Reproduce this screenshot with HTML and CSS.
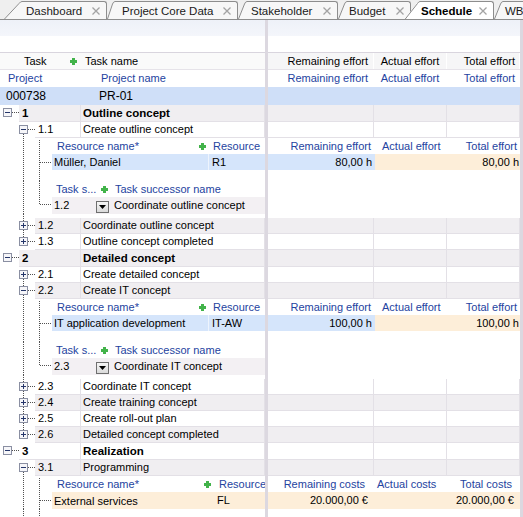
FILE: index.html
```html
<!DOCTYPE html>
<html lang="en">
<head>
    <meta charset="UTF-8">
    <meta name="viewport" content="width=device-width, initial-scale=1">
    <link rel="stylesheet" href="styles.css">
</head>
<body>

<div class="tabs">
    <div class="tab">
        <svg class="slant" width="18" height="18"><path class="f" d="M0 18L15 2Q16.5 0 18 0V18Z"/><path class="s" d="M0.5 18L15 2.5Q16.5 0.5 18 0.5"/></svg>
        <div class="lbl w1 p4">Dashboard<svg class="x" width="8" height="8"><path d="M0.5 0.5l7 7M7.5 0.5l-7 7"/></svg></div>
    </div>
    <div class="tab">
        <svg class="slant" width="8" height="18"><path class="f" d="M0 18L5 3Q6.5 0 8 0V18Z"/><path class="s" d="M0.5 18L5.5 3Q6.5 0.5 8 0.5"/></svg>
        <div class="lbl w2 p7">Project Core Data<svg class="x" width="8" height="8"><path d="M0.5 0.5l7 7M7.5 0.5l-7 7"/></svg></div>
    </div>
    <div class="tab">
        <svg class="slant" width="9" height="18"><path class="f" d="M0 18L6 3Q7.5 0 9 0V18Z"/><path class="s" d="M0.5 18L6.5 3Q7.5 0.5 9 0.5"/></svg>
        <div class="lbl w3 p4">Stakeholder<svg class="x" width="8" height="8"><path d="M0.5 0.5l7 7M7.5 0.5l-7 7"/></svg></div>
    </div>
    <div class="tab">
        <svg class="slant" width="9" height="18"><path class="f" d="M0 18L6 3Q7.5 0 9 0V18Z"/><path class="s" d="M0.5 18L6.5 3Q7.5 0.5 9 0.5"/></svg>
        <div class="lbl w4 p2">Budget<svg class="x" width="8" height="8"><path d="M0.5 0.5l7 7M7.5 0.5l-7 7"/></svg></div>
    </div>
    <div class="tab active">
        <svg class="slant" width="16" height="19"><path class="f" d="M0 19L13 2Q14.5 0 16 0V19Z"/><path class="s" d="M0.5 19L13.5 2.5Q14.5 0.5 16 0.5"/></svg>
        <div class="lbl w5 p1">Schedule<svg class="x" width="8" height="8"><path d="M0.5 0.5l7 7M7.5 0.5l-7 7"/></svg></div>
    </div>
    <div class="tab">
        <svg class="slant" width="9" height="18"><path class="f" d="M0 18L6 3Q7.5 0 9 0V18Z"/><path class="s" d="M0.5 18L6.5 3Q7.5 0.5 9 0.5"/></svg>
        <div class="lbl w6 p2">WBS<svg class="x" width="8" height="8"><path d="M0.5 0.5l7 7M7.5 0.5l-7 7"/></svg></div>
    </div>
</div>

<div class="main">

    <!-- tree side -->
    <div class="left">
        <div class="blank1"></div>
        <div class="blank2"></div>
        <div class="r colhead">
            <span class="ct">Task</span>
            <svg class="plus" width="7" height="7"><path d="M2 0h3v2h2v3H5v2H2V5H0V2h2z"/></svg>
            <span class="cn">Task name</span>
        </div>
        <div class="r projhead"><span class="p1">Project</span><span>Project name</span></div>
        <div class="r project"><span class="v1">000738</span><span>PR-01</span></div>

        <!-- 1 -->
        <div class="r h17 sec alt">
            <svg class="tr" width="19" height="17"><path class="dl" d="M12 7.5h7"/><rect class="bx" x="3.5" y="3.5" width="8" height="8"/><path class="mk" d="M5 7.5h5"/></svg>
            <div class="num n1">1</div><div class="nm">Outline concept</div>
        </div>
        <div class="r">
            <svg class="tr" width="35" height="16"><path class="dl" d="M28 7.5h7M23.5 12v4"/><rect class="bx" x="19.5" y="3.5" width="8" height="8"/><path class="mk" d="M21 7.5h5"/></svg>
            <div class="num n2">1.1</div><div class="nm">Create outline concept</div>
        </div>
        <div class="r dh">
            <svg class="tr" width="52" height="16"><path class="dl" d="M23.5 0v16M39.5 2v14"/></svg>
            <div class="rn">Resource name*<svg class="plus" width="7" height="7"><path d="M2 0h3v2h2v3H5v2H2V5H0V2h2z"/></svg></div>
            <div class="rc">Resource</div>
        </div>
        <div class="r dd sel">
            <svg class="tr" width="52" height="16"><path class="dl" d="M23.5 0v16M39.5 0v16M40 8.5h12"/></svg>
            <div class="rn">Müller, Daniel</div><div class="rc">R1</div>
        </div>
        <div class="r h11"><svg class="tr" width="52" height="11"><path class="dl" d="M23.5 0v11M39.5 0v11"/></svg></div>
        <div class="r dh">
            <svg class="tr" width="52" height="16"><path class="dl" d="M23.5 0v16M39.5 0v16"/></svg>
            <div class="sn">Task s...<svg class="plus" width="7" height="7"><path d="M2 0h3v2h2v3H5v2H2V5H0V2h2z"/></svg></div>
            <div class="st">Task successor name</div>
        </div>
        <div class="r h17 sd">
            <svg class="tr" width="52" height="17"><path class="dl" d="M23.5 0v17M39.5 0v8M40 7.5h12"/></svg>
            <div class="sn">1.2<span class="drop"><svg width="7" height="4"><path d="M0 0h7L3.5 4z"/></svg></span></div>
            <div class="st">Coordinate outline concept</div>
        </div>
        <div class="r h4"><svg class="tr" width="52" height="4"><path class="dl" d="M23.5 0v4"/></svg></div>
        <div class="r alt">
            <svg class="tr" width="35" height="16"><path class="dl" d="M28 7.5h7M23.5 0v3M23.5 12v4"/><rect class="bx" x="19.5" y="3.5" width="8" height="8"/><path class="mk" d="M21 7.5h5M23.5 5v5"/></svg>
            <div class="num n2">1.2</div><div class="nm">Coordinate outline concept</div>
        </div>
        <div class="r">
            <svg class="tr" width="35" height="16"><path class="dl" d="M28 7.5h7M23.5 0v3"/><rect class="bx" x="19.5" y="3.5" width="8" height="8"/><path class="mk" d="M21 7.5h5M23.5 5v5"/></svg>
            <div class="num n2">1.3</div><div class="nm">Outline concept completed</div>
        </div>

        <!-- 2 -->
        <div class="r h17 sec alt">
            <svg class="tr" width="19" height="17"><path class="dl" d="M12 7.5h7"/><rect class="bx" x="3.5" y="3.5" width="8" height="8"/><path class="mk" d="M5 7.5h5"/></svg>
            <div class="num n1">2</div><div class="nm">Detailed concept</div>
        </div>
        <div class="r">
            <svg class="tr" width="35" height="16"><path class="dl" d="M28 7.5h7M23.5 12v4"/><rect class="bx" x="19.5" y="3.5" width="8" height="8"/><path class="mk" d="M21 7.5h5M23.5 5v5"/></svg>
            <div class="num n2">2.1</div><div class="nm">Create detailed concept</div>
        </div>
        <div class="r alt">
            <svg class="tr" width="35" height="16"><path class="dl" d="M28 7.5h7M23.5 0v3M23.5 12v4"/><rect class="bx" x="19.5" y="3.5" width="8" height="8"/><path class="mk" d="M21 7.5h5"/></svg>
            <div class="num n2">2.2</div><div class="nm">Create IT concept</div>
        </div>
        <div class="r dh">
            <svg class="tr" width="52" height="16"><path class="dl" d="M23.5 0v16M39.5 2v14"/></svg>
            <div class="rn">Resource name*<svg class="plus" width="7" height="7"><path d="M2 0h3v2h2v3H5v2H2V5H0V2h2z"/></svg></div>
            <div class="rc">Resource</div>
        </div>
        <div class="r dd sel">
            <svg class="tr" width="52" height="16"><path class="dl" d="M23.5 0v16M39.5 0v16M40 8.5h12"/></svg>
            <div class="rn">IT application development</div><div class="rc">IT-AW</div>
        </div>
        <div class="r h11"><svg class="tr" width="52" height="11"><path class="dl" d="M23.5 0v11M39.5 0v11"/></svg></div>
        <div class="r dh">
            <svg class="tr" width="52" height="16"><path class="dl" d="M23.5 0v16M39.5 0v16"/></svg>
            <div class="sn">Task s...<svg class="plus" width="7" height="7"><path d="M2 0h3v2h2v3H5v2H2V5H0V2h2z"/></svg></div>
            <div class="st">Task successor name</div>
        </div>
        <div class="r h17 sd">
            <svg class="tr" width="52" height="17"><path class="dl" d="M23.5 0v17M39.5 0v8M40 7.5h12"/></svg>
            <div class="sn">2.3<span class="drop"><svg width="7" height="4"><path d="M0 0h7L3.5 4z"/></svg></span></div>
            <div class="st">Coordinate IT concept</div>
        </div>
        <div class="r h4"><svg class="tr" width="52" height="4"><path class="dl" d="M23.5 0v4"/></svg></div>
        <div class="r">
            <svg class="tr" width="35" height="16"><path class="dl" d="M28 7.5h7M23.5 0v3M23.5 12v4"/><rect class="bx" x="19.5" y="3.5" width="8" height="8"/><path class="mk" d="M21 7.5h5M23.5 5v5"/></svg>
            <div class="num n2">2.3</div><div class="nm">Coordinate IT concept</div>
        </div>
        <div class="r alt">
            <svg class="tr" width="35" height="16"><path class="dl" d="M28 7.5h7M23.5 0v3M23.5 12v4"/><rect class="bx" x="19.5" y="3.5" width="8" height="8"/><path class="mk" d="M21 7.5h5M23.5 5v5"/></svg>
            <div class="num n2">2.4</div><div class="nm">Create training concept</div>
        </div>
        <div class="r">
            <svg class="tr" width="35" height="16"><path class="dl" d="M28 7.5h7M23.5 0v3M23.5 12v4"/><rect class="bx" x="19.5" y="3.5" width="8" height="8"/><path class="mk" d="M21 7.5h5M23.5 5v5"/></svg>
            <div class="num n2">2.5</div><div class="nm">Create roll-out plan</div>
        </div>
        <div class="r alt">
            <svg class="tr" width="35" height="16"><path class="dl" d="M28 7.5h7M23.5 0v3"/><rect class="bx" x="19.5" y="3.5" width="8" height="8"/><path class="mk" d="M21 7.5h5M23.5 5v5"/></svg>
            <div class="num n2">2.6</div><div class="nm">Detailed concept completed</div>
        </div>

        <!-- 3 -->
        <div class="r h17 sec">
            <svg class="tr" width="19" height="17"><path class="dl" d="M12 7.5h7"/><rect class="bx" x="3.5" y="3.5" width="8" height="8"/><path class="mk" d="M5 7.5h5"/></svg>
            <div class="num n1">3</div><div class="nm">Realization</div>
        </div>
        <div class="r alt">
            <svg class="tr" width="35" height="16"><path class="dl" d="M28 7.5h7M23.5 12v4"/><rect class="bx" x="19.5" y="3.5" width="8" height="8"/><path class="mk" d="M21 7.5h5"/></svg>
            <div class="num n2">3.1</div><div class="nm">Programming</div>
        </div>
        <div class="r dh costs">
            <svg class="tr" width="52" height="16"><path class="dl" d="M23.5 0v16M39.5 2v14"/></svg>
            <div class="rn">Resource name*<svg class="plus" width="7" height="7"><path d="M2 0h3v2h2v3H5v2H2V5H0V2h2z"/></svg></div>
            <div class="rc">Resource</div>
        </div>
        <div class="r h17 dd costs pch">
            <svg class="tr" width="52" height="17"><path class="dl" d="M23.5 0v17M39.5 0v17M40 8.5h12"/></svg>
            <div class="rn">External services</div><div class="rc">FL</div>
        </div>
        <div class="r fill"><svg class="tr" width="52" height="20"><path class="dl" d="M23.5 0v20M39.5 0v20"/></svg></div>
    </div>

    <div class="split"></div>

    <!-- effort side -->
    <div class="right">
        <div class="blank1"></div>
        <div class="blank2"></div>
        <div class="r colhead hdr"><span class="k1">Remaining effort</span><span class="k2">Actual effort</span><span class="k3">Total effort</span></div>
        <div class="r projhead hdr"><span class="k1">Remaining effort</span><span class="k2">Actual effort</span><span class="k3">Total effort</span></div>
        <div class="r project"></div>

        <div class="r h17 g alt"><span></span><span></span><span></span></div>
        <div class="r g"><span></span><span></span><span></span></div>
        <div class="r dh eff"><span class="e1">Remaining effort</span><span class="e2">Actual effort</span><span class="e3">Total effort</span></div>
        <div class="r eff vals"><span class="e1 sel">80,00 h</span><span class="e2 peach"></span><span class="e3 peach">80,00 h</span></div>
        <div class="gapblock"></div>
        <div class="r g alt"><span></span><span></span><span></span></div>
        <div class="r g"><span></span><span></span><span></span></div>

        <div class="r h17 g alt"><span></span><span></span><span></span></div>
        <div class="r g"><span></span><span></span><span></span></div>
        <div class="r g alt"><span></span><span></span><span></span></div>
        <div class="r dh eff"><span class="e1">Remaining effort</span><span class="e2">Actual effort</span><span class="e3">Total effort</span></div>
        <div class="r eff vals"><span class="e1 sel">100,00 h</span><span class="e2 peach"></span><span class="e3 peach">100,00 h</span></div>
        <div class="gapblock"></div>
        <div class="r g"><span></span><span></span><span></span></div>
        <div class="r g alt"><span></span><span></span><span></span></div>
        <div class="r g"><span></span><span></span><span></span></div>
        <div class="r g alt"><span></span><span></span><span></span></div>

        <div class="r h17 g"><span></span><span></span><span></span></div>
        <div class="r g alt"><span></span><span></span><span></span></div>
        <div class="r dh eff cost"><span class="e1">Remaining costs</span><span class="e2">Actual costs</span><span class="e3">Total costs</span></div>
        <div class="r h17 eff cost vals peach"><span class="e1">20.000,00 €</span><span class="e2"></span><span class="e3">20.000,00 €</span></div>
    </div>

</div>

</body>
</html>
```

FILE: styles.css
```css
* {
    box-sizing: border-box;
}

body {
    margin: 0;
    width: 523px;
    height: 517px;
    overflow: hidden;
    background: #fff;
    font-family: "Liberation Sans", Arial, sans-serif;
    font-size: 11px;
    color: #000;
}

/* tab strip */
.tabs {
    display: flex;
    align-items: flex-end;
    height: 20px;
    padding: 1px 0 0 4px;
    background: #efefef;
    border-bottom: 1px solid #8d8d8d;
    overflow: hidden;
}

.tab {
    display: flex;
    flex: none;
    height: 18px;
}

.slant {
    display: block;
    flex: none;
}

.slant .f {
    fill: #f7f7f7;
}

.slant .s {
    fill: none;
    stroke: #8d8d8d;
}

.lbl {
    display: flex;
    align-items: center;
    flex: none;
    height: 100%;
    border-top: 1px solid #8d8d8d;
    border-right: 1px solid #8d8d8d;
    border-top-right-radius: 3px;
    background: #f7f7f7;
    font-size: 11.5px;
    color: #1a1a1a;
    white-space: nowrap;
    overflow: hidden;
}

.lbl .x {
    flex: none;
    margin-left: auto;
    margin-right: 6px;
}

.x path {
    stroke: #a3a3a3;
    stroke-width: 1.3;
}

.w1 { width: 85px; }
.w2 { width: 123px; }
.w3 { width: 91px; }
.w4 { width: 64px; }
.w5 { width: 74px; }
.w6 { width: 40px; }

.p1 { padding-left: 1px; }
.p2 { padding-left: 2px; }
.p4 { padding-left: 4px; }
.p7 { padding-left: 7px; }

.tab.active {
    height: 19px;
    margin-bottom: -1px;
    margin-left: -7px;
    position: relative;
    z-index: 1;
}

.tab.active .slant .f,
.tab.active .lbl {
    fill: #fff;
    background: #fff;
}

.tab.active .lbl {
    font-weight: bold;
    color: #000;
}

/* panes */
.main {
    display: flex;
    height: 497px;
}

.left {
    flex: none;
    width: 265px;
    overflow: hidden;
}

.split {
    flex: none;
    width: 3px;
    background: #dcd8e0;
}

.right {
    flex: none;
    width: 255px;
    border-right: 3px solid #dcd8e0;
    overflow: hidden;
}

.blank1 {
    height: 16px;
    background: linear-gradient(#eef1f8, #f4f6fb);
}

.blank2 {
    height: 17px;
    border-bottom: 1px solid #d9d5de;
}

.r {
    display: flex;
    height: 16px;
    line-height: 16px;
    white-space: nowrap;
}

.h17 { height: 17px; }
.h11 { height: 11px; }
.h4 { height: 4px; }
.fill { height: 20px; }

.tr {
    display: block;
    flex: none;
}

.dl {
    fill: none;
    stroke: #505050;
    stroke-dasharray: 1 1;
}

.bx {
    fill: #f6f6f9;
    stroke: #8a8fa2;
}

.mk {
    stroke: #25366a;
}

.plus {
    flex: none;
    display: block;
}

.plus path {
    fill: #42b34a;
}

/* header rows */
.colhead {
    height: 17px;
    align-items: center;
    background: #fafafa;
    border-bottom: 1px solid #e6e3e9;
}

.colhead .ct {
    width: 70px;
    padding-left: 24px;
}

.colhead .cn {
    padding-left: 8px;
}

.projhead {
    height: 17px;
    color: #2443a0;
}

.projhead .p1 {
    width: 101px;
    padding-left: 8px;
}

.project {
    height: 18px;
    line-height: 18px;
    background: #cfdff8;
    font-size: 12px;
}

.project .v1 {
    width: 99px;
    padding-left: 6px;
}

/* task rows */
.num,
.nm {
    height: 100%;
    line-height: 15px;
    border-right: 1px solid #e3e0e6;
    border-bottom: 1px solid #e3e0e6;
    overflow: hidden;
}

.h17 .num,
.h17 .nm {
    line-height: 16px;
}

.alt .num,
.alt .nm {
    background: #f0eef1;
}

.n1 {
    width: 62px;
    padding-left: 3px;
}

.n2 {
    width: 46px;
    padding-left: 3px;
}

.nm {
    flex: 1;
    padding-left: 2px;
}

.sec {
    font-weight: bold;
    font-size: 11.5px;
}

/* detail panels */
.dh {
    color: #2443a0;
}

.rn {
    display: flex;
    align-items: center;
    flex: none;
    width: 157px;
    overflow: hidden;
}

.rn .plus {
    margin-left: auto;
    margin-right: 3px;
}

.rc {
    flex: 1;
    overflow: hidden;
}

.dh .rn { padding-left: 5px; }
.dh .rc { padding-left: 4px; }
.dd .rn { padding-left: 2px; }
.dd .rc { padding-left: 3px; }

.sel .rn,
.sel .rc,
.e1.sel {
    background: #d5e5fb;
}

.sel .rn {
    border-right: 1px solid #eef4fd;
}

.costs .rn {
    width: 163px;
}

.costs.dh .rn .plus {
    margin-right: 4px;
}

.costs.dh .rc {
    padding-left: 4px;
}

.costs.dd .rc {
    padding-left: 2px;
}

.pch .rn,
.pch .rc,
.peach {
    background: #fdeed9;
}

.sn {
    display: flex;
    align-items: center;
    flex: none;
    width: 59px;
}

.sn .plus {
    margin-left: auto;
    margin-right: 3px;
}

.dh .sn { padding-left: 4px; }
.dh .st { padding-left: 4px; }

.sd .sn,
.sd .st {
    background: #f3f0f3;
    line-height: 17px;
}

.sd .sn { padding-left: 2px; }

.sd .st {
    flex: 1;
    padding-left: 3px;
}

.drop {
    display: flex;
    justify-content: center;
    align-items: flex-end;
    width: 13px;
    height: 12px;
    margin-left: auto;
    margin-right: 2px;
    margin-top: 2px;
    padding-bottom: 3px;
    border: 1px solid #6f6f6f;
    background: linear-gradient(#f6f6f6, #dadada);
}

.drop svg {
    display: block;
}

/* right pane */
.hdr span {
    height: 100%;
    border-right: 1px solid #fff;
}

.colhead.hdr {
    background: #f6f6f7;
}

.k1 {
    width: 106px;
    text-align: right;
    padding-right: 5px;
}

.k2 {
    width: 73px;
    text-align: center;
}

.k3 {
    width: 73px;
    text-align: right;
    padding-right: 4px;
}

.g span {
    height: 100%;
    border-right: 1px solid #e3e0e6;
    border-bottom: 1px solid #e3e0e6;
}

.g span:nth-child(1) { width: 106px; }
.g span:nth-child(2) { width: 73px; }
.g span:nth-child(3) { width: 73px; }

.g.alt span {
    background: #f0eef1;
}

.e1 {
    width: 107px;
    text-align: right;
    padding-right: 4px;
}

.e2 {
    width: 72px;
    padding-left: 7px;
}

.e3 {
    width: 73px;
    text-align: right;
    padding-right: 3px;
}

.vals .e1 { padding-right: 3px; }
.vals .e3 { padding-right: 1px; }

.cost .e1 { padding-right: 10px; }
.cost .e2 { padding-left: 2px; }
.cost .e3 { padding-right: 8px; }

.cost.vals {
    line-height: 17px;
}

.cost.vals .e1 { padding-right: 7px; }
.cost.vals .e3 { padding-right: 6px; }

.gapblock {
    height: 48px;
}
```
